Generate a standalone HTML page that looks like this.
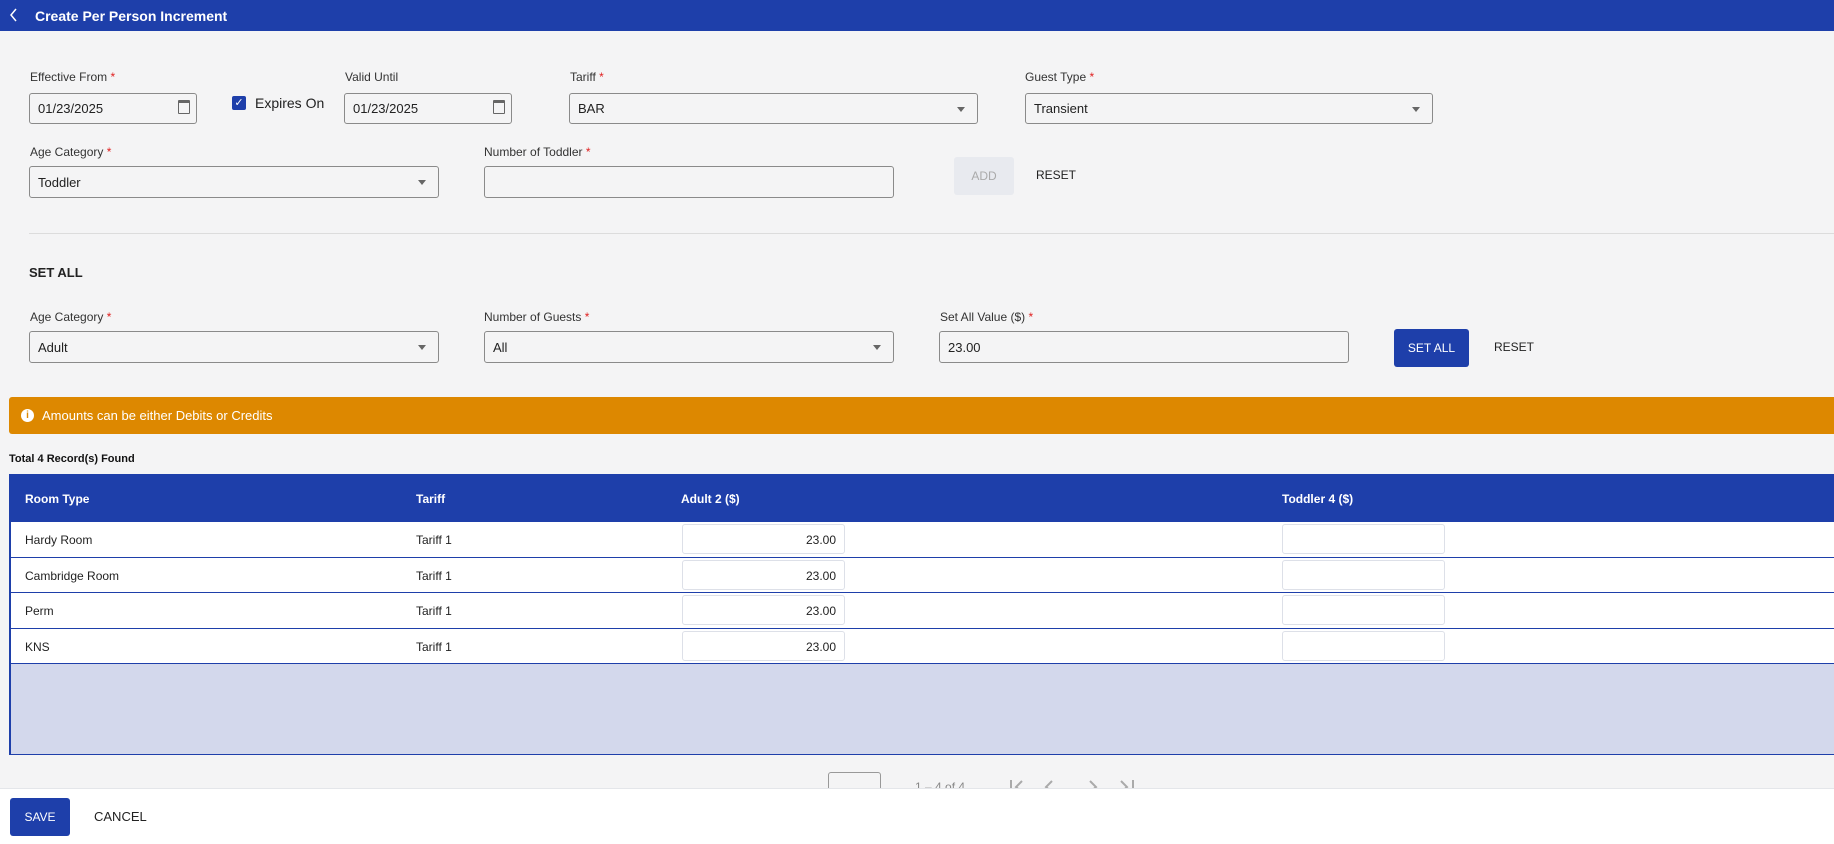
<!DOCTYPE html>
<html><head><meta charset="utf-8"><style>
*{box-sizing:border-box;margin:0;padding:0}
body{width:1834px;height:844px;overflow:hidden;background:#f4f4f5;font-family:"Liberation Sans",sans-serif;color:#222;position:relative}
.a{position:absolute}
.hdr{left:0;top:0;width:1834px;height:31px;background:#1e3faa;color:#fff;font-size:14px;font-weight:bold}
.lbl{font-size:12px;color:#333}
.lbl b{color:#e02020;font-weight:normal}
.in{border:1px solid #8a8a8a;border-radius:3px;background:#f4f4f5;font-size:13px;padding-left:8px;display:flex;align-items:center}
.arr{position:absolute;right:12px;top:50%;margin-top:-2px;border-left:4px solid transparent;border-right:4px solid transparent;border-top:5px solid #666}
.cal{position:absolute;right:6px;top:6px;width:12px;height:14px;border:1px solid #666;border-top-width:3px;border-radius:1px}
.btn{font-size:12px;display:flex;align-items:center;justify-content:center}
.th{color:#fff;font-size:12px;font-weight:bold}
.row{left:9px;width:1825px;height:35.5px;background:#fff;border-bottom:1px solid #1e3faa;font-size:12px}
.cell{position:absolute;top:11px}
.box{position:absolute;top:2px;height:30px;width:163px;border:1px solid #dde0e8;border-radius:3px;background:#fff;text-align:right;padding:8px 8px 0 0;font-size:12px}
</style></head><body>
<div class="a hdr"><svg class="a" style="left:9px;top:7px" width="10" height="16" viewBox="0 0 10 16"><path d="M7 2 L2 8 L7 14" fill="none" stroke="#fff" stroke-width="1.5"/></svg><span class="a" style="left:35px;top:8px">Create Per Person Increment</span></div>

<div class="a lbl" style="left:30px;top:70px">Effective From <b>*</b></div>
<div class="a in" style="left:29px;top:93px;width:168px;height:31px">01/23/2025<span class="cal"></span></div>
<div class="a" style="left:232px;top:96px;width:14px;height:14px;background:#1e3faa;border-radius:2px;color:#fff;font-size:11px;text-align:center;line-height:14px">✓</div>
<div class="a" style="left:255px;top:95px;font-size:14px">Expires On</div>
<div class="a lbl" style="left:345px;top:70px">Valid Until</div>
<div class="a in" style="left:344px;top:93px;width:168px;height:31px">01/23/2025<span class="cal"></span></div>
<div class="a lbl" style="left:570px;top:70px">Tariff <b>*</b></div>
<div class="a in" style="left:569px;top:93px;width:409px;height:31px">BAR<span class="arr"></span></div>
<div class="a lbl" style="left:1025px;top:70px">Guest Type <b>*</b></div>
<div class="a in" style="left:1025px;top:93px;width:408px;height:31px">Transient<span class="arr"></span></div>

<div class="a lbl" style="left:30px;top:145px">Age Category <b>*</b></div>
<div class="a in" style="left:29px;top:166px;width:410px;height:32px">Toddler<span class="arr"></span></div>
<div class="a lbl" style="left:484px;top:145px">Number of Toddler <b>*</b></div>
<div class="a in" style="left:484px;top:166px;width:410px;height:32px"></div>
<div class="a btn" style="left:954px;top:157px;width:60px;height:38px;background:#e8eaef;color:#aaa;border-radius:3px">ADD</div>
<div class="a btn" style="left:1036px;top:168px;font-size:12px">RESET</div>

<div class="a" style="left:29px;top:233px;width:1805px;height:1px;background:#dcdcdc"></div>
<div class="a" style="left:29px;top:265px;font-size:13px;font-weight:bold;color:#222">SET ALL</div>

<div class="a lbl" style="left:30px;top:310px">Age Category <b>*</b></div>
<div class="a in" style="left:29px;top:331px;width:410px;height:32px">Adult<span class="arr"></span></div>
<div class="a lbl" style="left:484px;top:310px">Number of Guests <b>*</b></div>
<div class="a in" style="left:484px;top:331px;width:410px;height:32px">All<span class="arr"></span></div>
<div class="a lbl" style="left:940px;top:310px">Set All Value ($) <b>*</b></div>
<div class="a in" style="left:939px;top:331px;width:410px;height:32px">23.00</div>
<div class="a btn" style="left:1394px;top:329px;width:75px;height:38px;background:#1e3faa;color:#fff;border-radius:3px">SET ALL</div>
<div class="a btn" style="left:1494px;top:340px">RESET</div>

<div class="a" style="left:9px;top:397px;width:1825px;height:37px;background:#dd8800;border-radius:3px 0 0 3px;color:#fff;font-size:13px">
<span class="a" style="left:12px;top:12px;width:13px;height:13px;border-radius:50%;background:#fff;color:#dd8800;font-size:10px;font-weight:bold;text-align:center;line-height:13px">i</span>
<span class="a" style="left:33px;top:11px">Amounts can be either Debits or Credits</span></div>

<div class="a" style="left:9px;top:453px;font-size:11px;font-weight:bold;color:#111">Total 4 Record(s) Found</div>

<div class="a" style="left:9px;top:474px;width:1825px;height:48px;background:#1e3faa"></div>
<div class="a th" style="left:25px;top:492px">Room Type</div>
<div class="a th" style="left:416px;top:492px">Tariff</div>
<div class="a th" style="left:681px;top:492px">Adult 2 ($)</div>
<div class="a th" style="left:1282px;top:492px">Toddler 4 ($)</div>

<div class="a" style="left:9px;top:522px;width:1825px;height:233px;background:#d3d8ec;border:1.5px solid #1e3faa;border-right:none"></div>
<div class="a row" style="top:522px"><span class="cell" style="left:16px">Hardy Room</span><span class="cell" style="left:407px">Tariff 1</span><span class="box" style="left:673px">23.00</span><span class="box" style="left:1273px"></span></div>
<div class="a row" style="top:557.5px"><span class="cell" style="left:16px">Cambridge Room</span><span class="cell" style="left:407px">Tariff 1</span><span class="box" style="left:673px">23.00</span><span class="box" style="left:1273px"></span></div>
<div class="a row" style="top:593px"><span class="cell" style="left:16px">Perm</span><span class="cell" style="left:407px">Tariff 1</span><span class="box" style="left:673px">23.00</span><span class="box" style="left:1273px"></span></div>
<div class="a row" style="top:628.5px"><span class="cell" style="left:16px">KNS</span><span class="cell" style="left:407px">Tariff 1</span><span class="box" style="left:673px">23.00</span><span class="box" style="left:1273px"></span></div>
<div class="a" style="left:9px;top:522px;width:1.5px;height:233px;background:#1e3faa"></div>

<div class="a" style="left:828px;top:772px;width:53px;height:26px;border:1px solid #999;border-radius:3px"></div>
<div class="a" style="left:915px;top:780px;font-size:12px;color:#888">1 – 4 of 4</div>
<svg class="a" style="left:1008px;top:778px" width="130" height="14" viewBox="0 0 130 14"><g fill="none" stroke="#aaa" stroke-width="2"><path d="M3 2V14M14 3L8 9L14 14"/><path d="M44 3L38 9L44 14"/><path d="M82 3L88 9L82 14"/><path d="M113 3L119 9L113 14M125 2V14"/></g></svg>

<div class="a" style="left:0;top:788px;width:1834px;height:56px;background:#fff;border-top:1px solid #e4e6ea"></div>
<div class="a btn" style="left:10px;top:798px;width:60px;height:38px;background:#1e3faa;color:#fff;border-radius:3px">SAVE</div>
<div class="a btn" style="left:94px;top:809px;font-size:13px">CANCEL</div>
</body></html>
